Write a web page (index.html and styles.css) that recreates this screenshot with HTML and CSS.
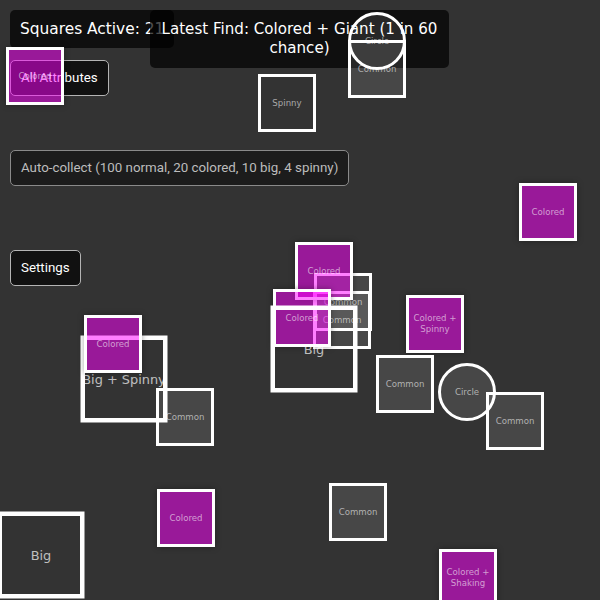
FILE: index.html
```html
<!DOCTYPE html>
<html lang="en">
<head>
<meta charset="utf-8">
<title>Squares</title>
<link rel="stylesheet" href="styles.css">
</head>
<body>
<div class="controls">
  <button class="btn btn-attrs">All Attributes</button>
  <button class="btn btn-auto">Auto-collect (100 normal, 20 colored, 10 big, 4 spinny)</button>
  <button class="btn btn-settings">Settings</button>
</div>

<div class="hud hud-count">Squares Active: 21</div>
<div class="hud hud-find">Latest Find: Colored + Giant (1 in 60 chance)</div>

<div class="field">
  <div class="sq colored" style="left:6px;top:47px"><span>Colored</span></div>
  <div class="sq plain" style="left:258px;top:74px"><span>Spinny</span></div>
  <div class="sq circle" style="left:348px;top:12px"><span>Circle</span></div>
  <div class="sq" style="left:348px;top:40px"><span>Common</span></div>
  <div class="sq colored" style="left:519px;top:183px"><span>Colored</span></div>
  <div class="sq" style="left:314px;top:273px"><span>Common</span></div>
  <div class="sq" style="left:313px;top:291px"><span>Common</span></div>
  <div class="sq colored" style="left:295px;top:242px"><span>Colored</span></div>
  <div class="sq colored" style="left:273px;top:289px"><span>Colored</span></div>
  <div class="sq plain big" style="left:285px;top:319.5px"><span>Big</span></div>
  <div class="sq colored" style="left:406px;top:295px"><span>Colored + Spinny</span></div>
  <div class="sq" style="left:376px;top:355px"><span>Common</span></div>
  <div class="sq circle" style="left:438px;top:363px"><span>Circle</span></div>
  <div class="sq" style="left:486px;top:392px"><span>Common</span></div>
  <div class="sq plain big" style="left:94.5px;top:349.5px"><span class="one-line">Big + Spinny</span></div>
  <div class="sq colored" style="left:84px;top:315px"><span>Colored</span></div>
  <div class="sq" style="left:156px;top:388px"><span>Common</span></div>
  <div class="sq plain big" style="left:11.5px;top:525.5px"><span>Big</span></div>
  <div class="sq colored" style="left:157px;top:489px"><span>Colored</span></div>
  <div class="sq" style="left:329px;top:483px"><span>Common</span></div>
  <div class="sq colored" style="left:439px;top:549px"><span>Colored + Shaking</span></div>
</div>
</body>
</html>
```

FILE: styles.css
```css
html, body {
  margin: 0;
  padding: 0;
  width: 600px;
  height: 600px;
  overflow: hidden;
  background: #333333;
}

body {
  position: relative;
  font-family: "DejaVu Sans", sans-serif;
  color: #fff;
}

.controls {
  display: flex;
  flex-direction: column;
  align-items: flex-start;
  padding: 60px 0 0 10px;
}

.btn {
  font-family: Roboto, "Liberation Sans", sans-serif;
  font-size: 13.333px;
  line-height: 16px;
  color: #fff;
  background: #111111;
  border: 1px solid #b4b4b4;
  border-radius: 5px;
  padding: 9px 10px;
  margin: 0;
}

.btn-auto {
  margin-top: 54px;
  background: #1c1c1c;
  color: #bdbdbd;
  border-color: #8a8a8a;
}

.btn-settings {
  margin-top: 64px;
}

.hud {
  position: absolute;
  top: 10px;
  background: rgba(0, 0, 0, 0.7);
  border-radius: 5px;
  padding: 10px;
  font-size: 15.4px;
  line-height: 19px;
  color: #fff;
}

.hud-count {
  left: 10px;
  padding-bottom: 9px;
}

.hud-find {
  left: 150px;
  width: 287px;
  padding: 10px 6px;
  font-size: 15.1px;
  text-align: center;
}

.field {
  position: absolute;
  inset: 0;
  pointer-events: none;
}

.sq {
  position: absolute;
  box-sizing: border-box;
  width: 58px;
  height: 58px;
  border: 3px solid #fff;
  background: rgba(255, 255, 255, 0.1);
  display: flex;
  align-items: center;
  justify-content: center;
  text-align: center;
  font-size: 8.6px;
  line-height: 11px;
  color: rgba(255, 255, 255, 0.58);
}

.sq.plain {
  background: transparent;
}

.sq.colored {
  background: rgba(255, 0, 255, 0.5);
  box-shadow: 0 0 6px rgba(0, 0, 0, 0.35);
}

.sq.circle {
  border-radius: 50%;
}

.sq.big {
  transform: scale(1.5);
  color: rgba(255, 255, 255, 0.7);
}

.one-line {
  white-space: nowrap;
}
```
